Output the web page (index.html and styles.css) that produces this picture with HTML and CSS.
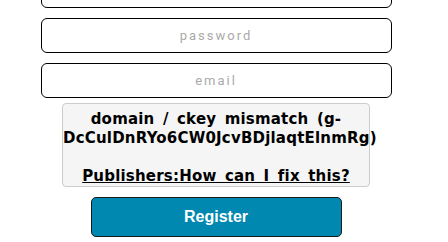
FILE: index.html
```html
<!DOCTYPE html>
<html lang="en">
<head>
    <meta charset="UTF-8">
    <meta name="viewport" content="width=device-width, initial-scale=1.0">
    <title>Register</title>
    <link rel="stylesheet" href="styles.css">
</head>
<body>

    <!-- Register form -->
    <div class="register-form">
        <input type="text" class="field" placeholder="username" />
        <input type="password" class="field" placeholder="password" />
        <input type="text" class="field" placeholder="email" />

        <!-- Captcha error box -->
        <div class="captcha-box">
            <p>domain / ckey mismatch (g-<br>DcCulDnRYo6CW0JcvBDjlaqtElnmRg)</p>
            <p><a href="#">Publishers:How can I fix this?</a></p>
        </div>

        <button class="register-button">Register</button>
    </div>

</body>
</html>
```

FILE: styles.css
```css
body {
    margin: 0;
    padding: 0;
    background: #ffffff;
    font-family: Roboto, 'Liberation Sans', sans-serif;
    overflow: hidden;
}

.register-form {
    width: 432px;
    margin-top: -27px;
    display: flex;
    flex-direction: column;
    align-items: center;
}

.field {
    box-sizing: border-box;
    width: 351px;
    height: 35px;
    margin-bottom: 10px;
    border: 1px solid #000000;
    border-radius: 6px;
    background: #ffffff;
    text-align: center;
    font-family: Roboto, 'Liberation Sans', sans-serif;
    font-size: 13px;
    letter-spacing: 2px;
    outline: none;
}

.field::placeholder {
    color: #aaaaaa;
}

.captcha-box {
    box-sizing: border-box;
    width: 308px;
    height: 84px;
    margin-top: -5px;
    padding-top: 6px;
    background: #f5f5f5;
    border: 1px solid #cccccc;
    border-radius: 4px;
    text-align: center;
    font-family: 'DejaVu Sans', Verdana, sans-serif;
    font-size: 15px;
    font-weight: bold;
    line-height: 19px;
    letter-spacing: 0.2px;
    word-spacing: 3px;
    color: #000000;
    white-space: nowrap;
}

.captcha-box p {
    margin: 0 0 19px 0;
}

.captcha-box a {
    color: #000000;
    text-decoration: underline;
}

.register-button {
    box-sizing: border-box;
    width: 251px;
    height: 40px;
    margin-top: 10px;
    background: #0088b0;
    border: 1px solid #1a1a1a;
    border-radius: 5px;
    color: #ffffff;
    font-family: 'Liberation Sans', Arial, sans-serif;
    font-size: 16px;
    font-weight: bold;
    cursor: pointer;
}
```
